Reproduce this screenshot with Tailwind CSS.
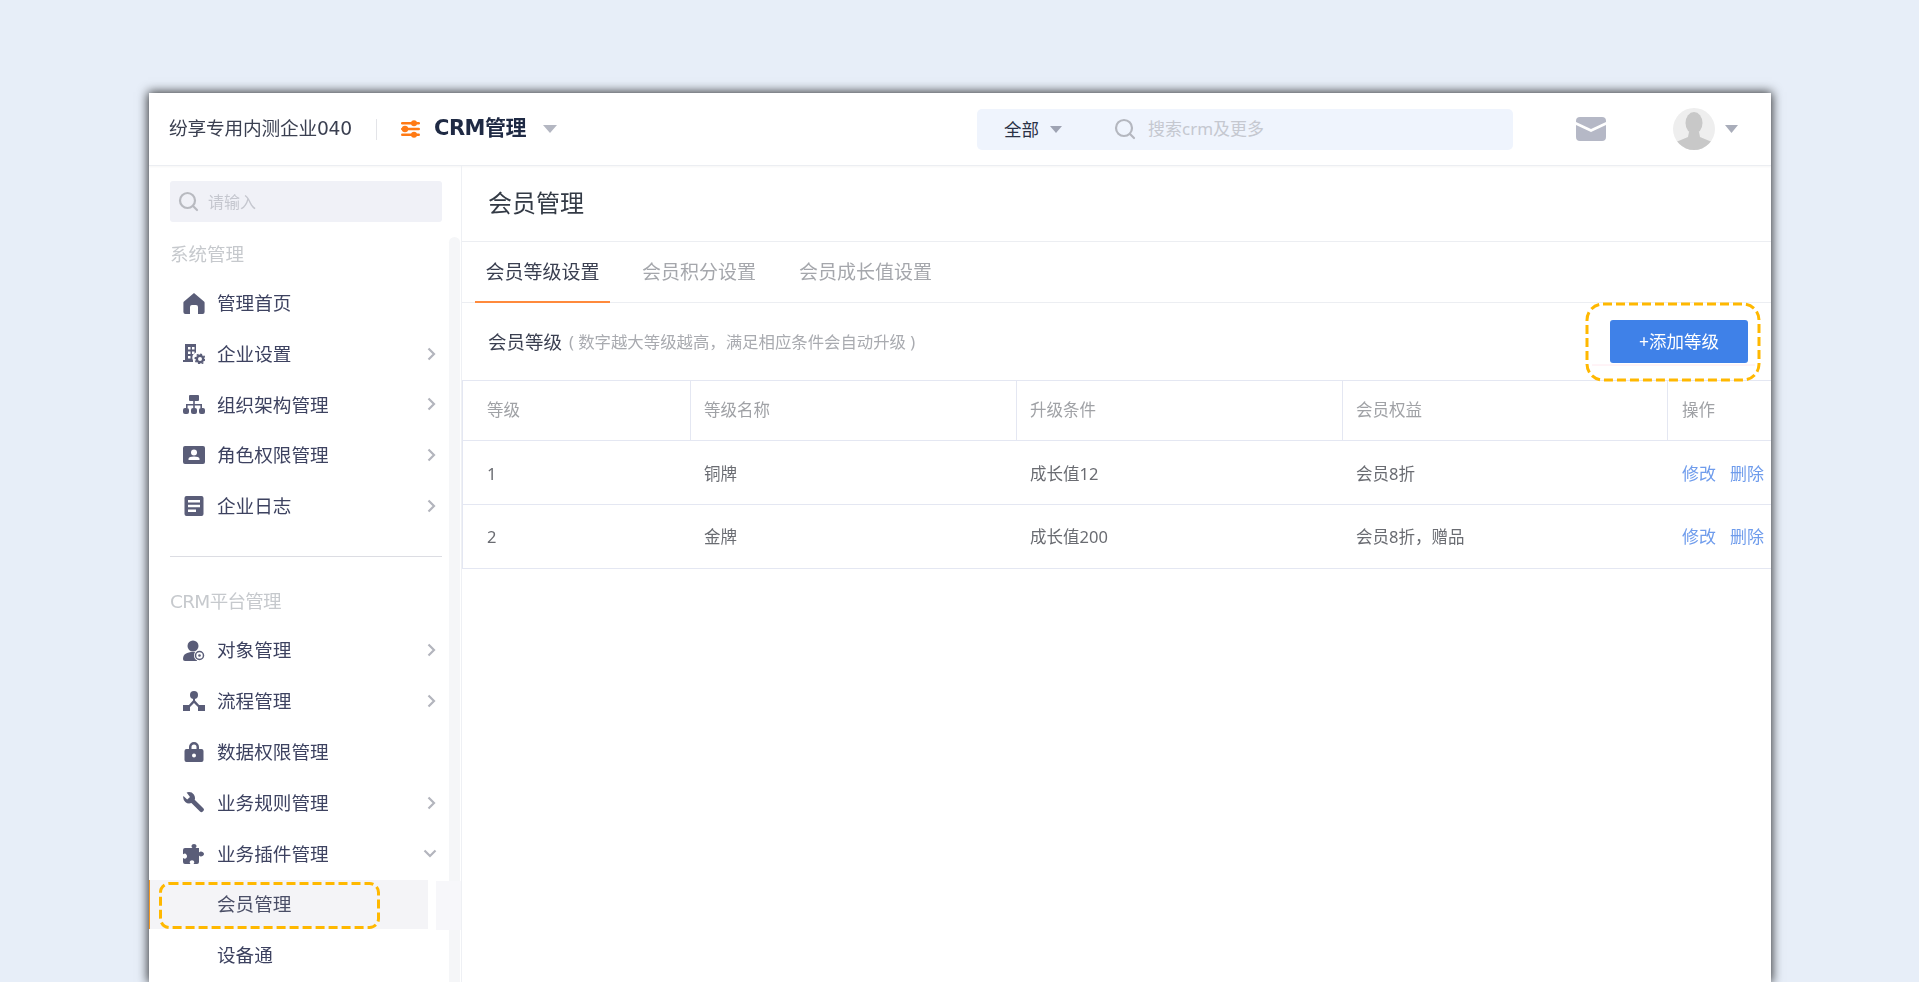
<!DOCTYPE html>
<html lang="zh">
<head>
	<meta charset="UTF-8">
	<title>会员管理</title>
	<script src="https://cdn.jsdelivr.net/npm/@tailwindcss/browser@4"></script>
</head>
<body class="bg-[#e7eef8]">
	<div class="h-[982px] overflow-hidden pt-[93px] pl-[149px] font-['Noto_Sans','Noto_Sans_CJK_SC',sans-serif]">
		<div class="w-[1622px] h-[889px] bg-white shadow-[0_0_10px_1px_rgba(0,0,0,0.8)] flex flex-col blur-[0.5px]">

			<!-- top bar -->
			<header class="h-[73px] shrink-0 flex items-center border-b border-[#eceef2] shadow-[0_1px_2px_rgba(0,0,0,0.04)]">
				<div class="w-[227px] pl-[20px] text-[18.7px] text-[#3a3f50] font-['DejaVu_Sans','Noto_Sans_CJK_SC',sans-serif] tracking-[-0.2px] whitespace-nowrap">纷享专用内测企业040</div>
				<div class="w-px h-[21px] bg-[#e3e4e8]"></div>
				<svg class="ml-[23px]" width="21" height="20" viewBox="0 0 21 20" fill="#ff7a14">
					<rect x="1" y="3" width="19" height="2.6" rx="1.3"/><circle cx="14" cy="4.2" r="3"/>
					<rect x="1" y="8.7" width="19" height="2.6" rx="1.3"/><circle cx="5" cy="10" r="3.2"/>
					<rect x="1" y="14.4" width="19" height="2.6" rx="1.3"/><circle cx="14" cy="15.7" r="3"/>
				</svg>
				<div class="ml-[13px] w-[93px] whitespace-nowrap text-[21px] font-bold text-[#1f2a44] font-['DejaVu_Sans','Noto_Sans_CJK_SC',sans-serif] tracking-[-0.5px]">CRM管理</div>
				<svg class="ml-[16px]" width="14" height="8" viewBox="0 0 14 8" fill="#b4b7c2"><path d="M0 0h14L7 8z"/></svg>

				<div class="ml-[420px] w-[536px] h-[41px] rounded-[5px] bg-[#eff4fd] flex items-center">
					<div class="ml-[27px] w-[36px] whitespace-nowrap text-[17.5px] text-[#2a3146]">全部</div>
					<svg class="ml-[10px]" width="12" height="7" viewBox="0 0 12 7" fill="#9ea3b3"><path d="M0 0h12L6 7z"/></svg>
					<svg class="ml-[52px]" width="22" height="22" viewBox="0 0 22 22" fill="none" stroke="#b4b7bf" stroke-width="2.2"><circle cx="10" cy="10" r="8"/><path d="M16 16l4 4" stroke-linecap="round"/></svg>
					<div class="ml-[12px] text-[17px] text-[#c5c8d0]">搜索crm及更多</div>
				</div>

				<svg class="ml-[63px]" width="30" height="24" viewBox="0 0 30 24"><path d="M4 0h22a4 4 0 0 1 4 4v1l-15 7L0 5V4a4 4 0 0 1 4-4z" fill="#b5b8c6"/><path d="M0 8l15 7 15-7v12a4 4 0 0 1-4 4H4a4 4 0 0 1-4-4z" fill="#b5b8c6"/></svg>
				<svg class="ml-[66px]" width="44" height="42" viewBox="0 0 44 42">
					<defs><clipPath id="av"><circle cx="22" cy="21" r="21"/></clipPath></defs>
					<circle cx="22" cy="21" r="21" fill="#eeeeee"/>
					<g clip-path="url(#av)" fill="#c8c8c8"><ellipse cx="22" cy="15" rx="8.5" ry="11"/><path d="M17 24h10l1 5 12 5v8H4v-8l12-5z"/></g>
				</svg>
				<svg class="ml-[9px]" width="13" height="8" viewBox="0 0 13 8" fill="#a9adba"><path d="M0 0h13L6.5 8z"/></svg>
			</header>

			<div class="flex flex-1 min-h-0">
				<!-- sidebar -->
				<aside class="relative w-[312px] shrink-0 overflow-hidden">
					<div class="mt-[15px] ml-[21px] mr-[19px] h-[41px] rounded-[3px] bg-[#f0f1f7] flex items-center pl-[8px]">
						<svg width="21" height="21" viewBox="0 0 21 21" fill="none" stroke="#b8bac0" stroke-width="2.2"><circle cx="9.5" cy="9.5" r="7.5"/><path d="M15 15l4 4" stroke-linecap="round"/></svg>
						<span class="ml-[9px] text-[16px] text-[#c5c7cf]">请输入</span>
					</div>

					<div class="mt-[20px] ml-[21px] h-[24px] leading-[24px] text-[18.5px] text-[#c6c9cd]">系统管理</div>

					<nav class="mt-[12px] text-[18.6px] text-[#3d4260]">
						<a class="h-[50.6px] flex items-center pl-[34px]">
							<svg class="w-[22px] shrink-0" height="21" viewBox="0 0 22 21" fill="#5a5d78"><path d="M11 0l10 8.5a1.5 1.5 0 0 1 .6 1.2V19a2 2 0 0 1-2 2H15v-7a2 2 0 0 0-2-2H9a2 2 0 0 0-2 2v7H2.4a2 2 0 0 1-2-2V9.7a1.5 1.5 0 0 1 .6-1.2z"/></svg>
							<span class="ml-[12px] flex-1">管理首页</span>
						</a>
						<a class="h-[50.6px] flex items-center pl-[34px]">
							<svg class="w-[22px] shrink-0" height="20" viewBox="0 0 22 20" fill="#5a5d78"><path fill-rule="evenodd" d="M2 0h11v8.5a5.5 5.5 0 0 0-3 8V18H0v-2h2zM5 3v2.5h2.5V3zm4 0v2.5h2.5V3zM5 7.5V10h2.5V7.5zm4 0V10h2.5V7.5zM5 12v2.5h2.5V12z"/><circle cx="17" cy="15" r="3.2" fill="none" stroke="#5a5d78" stroke-width="2.4"/><circle cx="17" cy="15" r="4.8" fill="none" stroke="#5a5d78" stroke-width="1.5" stroke-dasharray="2 1.7"/></svg>
							<span class="ml-[12px] flex-1">企业设置</span>
							<svg class="mr-[25px]" width="9" height="14" viewBox="0 0 9 14" fill="none" stroke="#b3b5bd" stroke-width="2.2"><path d="M1.5 1.5L7 7l-5.5 5.5"/></svg>
						</a>
						<a class="h-[50.6px] flex items-center pl-[34px]">
							<svg class="w-[22px] shrink-0" height="19" viewBox="0 0 22 19" fill="#5a5d78"><rect x="6" y="0" width="10" height="6" rx="1"/><path d="M10.2 6h1.6v3H19v4h-1.6v-2.4h-5.6V13h-1.6v-2.4H4.6V13H3V9h7.2z"/><rect x="0" y="13" width="6" height="6" rx="2"/><rect x="8" y="13" width="6" height="6" rx="2"/><rect x="16" y="13" width="6" height="6" rx="2"/></svg>
							<span class="ml-[12px] flex-1">组织架构管理</span>
							<svg class="mr-[25px]" width="9" height="14" viewBox="0 0 9 14" fill="none" stroke="#b3b5bd" stroke-width="2.2"><path d="M1.5 1.5L7 7l-5.5 5.5"/></svg>
						</a>
						<a class="h-[50.6px] flex items-center pl-[34px]">
							<svg class="w-[22px] shrink-0" height="18" viewBox="0 0 22 18" fill="#5a5d78"><path fill-rule="evenodd" d="M2 0h18a2 2 0 0 1 2 2v14a2 2 0 0 1-2 2H2a2 2 0 0 1-2-2V2a2 2 0 0 1 2-2zm9 3.5a3 3 0 1 0 0 6 3 3 0 0 0 0-6zM5.5 14h11v-1.2c0-1.5-2.5-2.3-5.5-2.3s-5.5.8-5.5 2.3z"/></svg>
							<span class="ml-[12px] flex-1">角色权限管理</span>
							<svg class="mr-[25px]" width="9" height="14" viewBox="0 0 9 14" fill="none" stroke="#b3b5bd" stroke-width="2.2"><path d="M1.5 1.5L7 7l-5.5 5.5"/></svg>
						</a>
						<a class="h-[50.6px] flex items-center pl-[34px]">
							<svg class="w-[22px] shrink-0" height="20" viewBox="0 0 22 20" fill="#5a5d78"><path fill-rule="evenodd" d="M3.5 0h15a2 2 0 0 1 2 2v16a2 2 0 0 1-2 2h-15a2 2 0 0 1-2-2V2a2 2 0 0 1 2-2zM5 4v2.4h12V4zm0 4.8v2.4h12V8.8zm0 4.8V16h8v-2.4z"/></svg>
							<span class="ml-[12px] flex-1">企业日志</span>
							<svg class="mr-[25px]" width="9" height="14" viewBox="0 0 9 14" fill="none" stroke="#b3b5bd" stroke-width="2.2"><path d="M1.5 1.5L7 7l-5.5 5.5"/></svg>
						</a>
					</nav>

					<div class="mt-[25px] ml-[21px] mr-[19px] h-px bg-[#dcdde3]"></div>
					<div class="mt-[33px] ml-[21px] h-[24px] leading-[24px] text-[18.5px] text-[#c6c9cd] font-['DejaVu_Sans','Noto_Sans_CJK_SC',sans-serif] tracking-[-0.7px] whitespace-nowrap">CRM平台管理</div>

					<nav class="mt-[11px] text-[18.6px] text-[#3d4260]">
						<a class="h-[50.8px] flex items-center pl-[34px]">
							<svg class="w-[22px] shrink-0" height="21" viewBox="0 0 22 21"><circle cx="10" cy="6" r="5.5" fill="#5a5d78"/><path d="M0 19c0-5 4-7 10-7 2 0 3 .2 4 .6v8.4H2a2 2 0 0 1-2-2z" fill="#5a5d78"/><circle cx="16.5" cy="15.5" r="5.5" fill="#fff"/><circle cx="16.5" cy="15.5" r="4" fill="none" stroke="#5a5d78" stroke-width="1.5"/><circle cx="16.5" cy="15.5" r="1.3" fill="#5a5d78"/></svg>
							<span class="ml-[12px] flex-1">对象管理</span>
							<svg class="mr-[25px]" width="9" height="14" viewBox="0 0 9 14" fill="none" stroke="#b3b5bd" stroke-width="2.2"><path d="M1.5 1.5L7 7l-5.5 5.5"/></svg>
						</a>
						<a class="h-[50.8px] flex items-center pl-[34px]">
							<svg class="w-[22px] shrink-0" height="20" viewBox="0 0 22 20" fill="#5a5d78"><circle cx="11" cy="4" r="4"/><rect x="0" y="14" width="7" height="6"/><rect x="15" y="14" width="7" height="6"/><path d="M10 6h2v3.5l5 5.5-1.5 1.5L11 12l-4.5 4.5L5 15l5-5.5z"/></svg>
							<span class="ml-[12px] flex-1">流程管理</span>
							<svg class="mr-[25px]" width="9" height="14" viewBox="0 0 9 14" fill="none" stroke="#b3b5bd" stroke-width="2.2"><path d="M1.5 1.5L7 7l-5.5 5.5"/></svg>
						</a>
						<a class="h-[50.8px] flex items-center pl-[34px]">
							<svg class="w-[22px] shrink-0" height="21" viewBox="0 0 22 21" fill="#5a5d78"><path fill-rule="evenodd" d="M6 8V6a5 5 0 0 1 10 0v2h2.5a2 2 0 0 1 2 2v9a2 2 0 0 1-2 2h-15a2 2 0 0 1-2-2v-9a2 2 0 0 1 2-2zm2.5 0h5V6a2.5 2.5 0 0 0-5 0zM11 12.5a2 2 0 1 0 0 4 2 2 0 0 0 0-4z"/></svg>
							<span class="ml-[12px] flex-1">数据权限管理</span>
						</a>
						<a class="h-[50.8px] flex items-center pl-[34px]">
							<svg class="w-[22px] shrink-0" height="21" viewBox="0 0 22 21" fill="#5a5d78"><path d="M6 0a6 6 0 0 1 5.7 7.8l8.6 8.4a2 2 0 0 1 0 2.8l-.5.5a2 2 0 0 1-2.8 0L8.4 11A6 6 0 0 1 .4 4l3.8 3.5L7 5 3.6.5A6 6 0 0 1 6 0z"/></svg>
							<span class="ml-[12px] flex-1">业务规则管理</span>
							<svg class="mr-[25px]" width="9" height="14" viewBox="0 0 9 14" fill="none" stroke="#b3b5bd" stroke-width="2.2"><path d="M1.5 1.5L7 7l-5.5 5.5"/></svg>
						</a>
						<a class="h-[50.8px] flex items-center pl-[34px]">
							<svg class="w-[22px] shrink-0" height="20" viewBox="0 0 22 20" fill="#5a5d78"><path d="M7 4h2.5c-.8-.8-1-1.5-1-2 0-1.2 1.2-2 2.5-2s2.5.8 2.5 2c0 .5-.2 1.2-1 2H16v4.5c.8-.8 1.5-1 2-1 1.2 0 3 1 3 2.5s-1.8 2.5-3 2.5c-.5 0-1.2-.2-2-1V18a2 2 0 0 1-2 2h-3.5c.6-.8.8-1.3.8-1.8 0-1.2-1.1-2-2.3-2s-2.3.8-2.3 2c0 .5.2 1 .8 1.8H2a2 2 0 0 1-2-2v-4c.8.6 1.3.8 1.8.8 1.2 0 2.2-1.2 2.2-2.5S3 9.5 1.8 9.5c-.5 0-1 .2-1.8.8V6a2 2 0 0 1 2-2z"/></svg>
							<span class="ml-[12px] flex-1">业务插件管理</span>
							<svg class="mr-[24px]" width="14" height="9" viewBox="0 0 14 9" fill="none" stroke="#b3b5bd" stroke-width="2.2"><path d="M1.5 1.5L7 7l5.5-5.5"/></svg>
						</a>
						<a class="w-[279px] h-[49px] my-[0.8px] flex items-center pl-[67px] bg-[#f4f4f7] border-l border-[#f2961e] text-[#4a4e66]">会员管理</a>
						<a class="h-[50.8px] flex items-center pl-[68px]">设备通</a>
					</nav>

					<!-- scrollbar and highlight overlays -->
					<div class="absolute top-[71px] left-[300px] bottom-0 w-[11px] rounded-t-full bg-[#f5f6f8]"></div>
					<div class="absolute top-[715px] left-[287px] w-[25px] h-[49px] bg-[#f7f7fa]"></div>
					<svg class="absolute top-[716px] left-[10px]" width="222" height="48" viewBox="0 0 222 48" fill="none"><rect x="1.5" y="1.5" width="218" height="44" rx="9" stroke="#ffb800" stroke-width="3" stroke-dasharray="9 4"/></svg>
				</aside>

				<!-- main content -->
				<main class="relative flex-1 min-w-0 border-l border-[#eef0f4]">
					<h1 class="h-[76px] pb-[2px] flex items-center pl-[26px] text-[24px] text-[#333a45] border-b border-[#eceef2]">会员管理</h1>

					<div class="h-[61px] flex border-b border-[#eceef2] text-[19px] text-[#a5a7ac]">
						<div class="relative ml-[13px] w-[135px] flex items-center justify-center text-[#3a3f50]">
							会员等级设置
							<div class="absolute left-0 right-0 bottom-[-1px] h-[2px] bg-[#ff8a3c]"></div>
						</div>
						<div class="ml-[32px] flex items-center">会员积分设置</div>
						<div class="ml-[43px] flex items-center">会员成长值设置</div>
					</div>

					<div class="h-[77px] flex items-center pl-[26px]">
						<span class="text-[18.5px] text-[#3a3f50]">会员等级</span>
						<span class="ml-[7px] text-[16.4px] text-[#a9abb0] pt-[2px]">( 数字越大等级越高，满足相应条件会自动升级 )</span>
						<button class="ml-auto mr-[23px] w-[138px] h-[43px] rounded-[3px] bg-[#3f81e8] text-white text-[17.5px]">+添加等级</button>
					</div>

					<div class="border-y border-l border-[#e4e7f2] text-[16.5px]">
						<div class="h-[60px] flex items-center text-[#a0a2a6] border-b border-[#e4e7f2]">
							<div class="w-[228px] h-full flex items-center pl-[24px] border-r border-[#e4e7f2]">等级</div>
							<div class="w-[326px] h-full flex items-center pl-[13px] border-r border-[#e4e7f2]">等级名称</div>
							<div class="w-[326px] h-full flex items-center pl-[13px] border-r border-[#e4e7f2]">升级条件</div>
							<div class="w-[325px] h-full flex items-center pl-[13px] border-r border-[#e4e7f2]">会员权益</div>
							<div class="flex-1 pl-[14px]">操作</div>
						</div>
						<div class="h-[64px] pt-[3px] flex items-center text-[#6a6c72] border-b border-[#e4e7f2]">
							<div class="w-[228px] pl-[24px]">1</div>
							<div class="w-[326px] pl-[13px]">铜牌</div>
							<div class="w-[326px] pl-[13px]">成长值12</div>
							<div class="w-[325px] pl-[13px]">会员8折</div>
							<div class="flex-1 pl-[14px] text-[17px] text-[#6f9cec] flex gap-[14px]"><span>修改</span><span>删除</span></div>
						</div>
						<div class="h-[63px] pt-[1px] flex items-center text-[#6a6c72]">
							<div class="w-[228px] pl-[24px]">2</div>
							<div class="w-[326px] pl-[13px]">金牌</div>
							<div class="w-[326px] pl-[13px]">成长值200</div>
							<div class="w-[325px] pl-[13px]">会员8折，赠品</div>
							<div class="flex-1 pl-[14px] text-[17px] text-[#6f9cec] flex gap-[14px]"><span>修改</span><span>删除</span></div>
						</div>
					</div>

					<!-- callout round the add button -->
					<svg class="absolute top-[136px] left-[1122px]" width="178" height="82" viewBox="0 0 178 82" fill="none"><rect x="3" y="2" width="172" height="76" rx="16" stroke="#ffb800" stroke-width="3" stroke-dasharray="9 4"/><path d="M8 63h163" stroke="#ffe8ee" stroke-width="1"/></svg>
				</main>
			</div>
		</div>
	</div>
</body>
</html>
